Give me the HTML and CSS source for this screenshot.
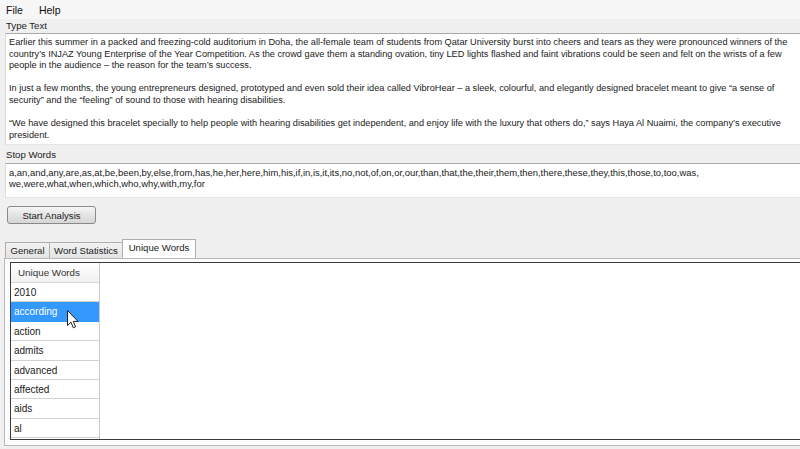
FILE: index.html
```html
<!DOCTYPE html>
<html lang="en">
<head>
  <meta charset="UTF-8" />
  <title>Text Analyzer</title>
  <link rel="stylesheet" href="styles.css">
</head>
<body>
  <div class="window">
    <div class="menubar">
      <span class="menu-item">File</span>
      <span class="menu-item">Help</span>
    </div>
    <div class="field-label label-type">Type Text</div>
    <div class="textbox main-text">
      <div>Earlier this summer in a packed and freezing-cold auditorium in Doha, the all-female team of students from Qatar University burst into cheers and tears as they were pronounced winners of the</div>
      <div>country’s INJAZ Young Enterprise of the Year Competition. As the crowd gave them a standing ovation, tiny LED lights flashed and faint vibrations could be seen and felt on the wrists of a few</div>
      <div>people in the audience – the reason for the team’s success.</div>
      <div>&nbsp;</div>
      <div>In just a few months, the young entrepreneurs designed, prototyped and even sold their idea called VibroHear – a sleek, colourful, and elegantly designed bracelet meant to give “a sense of</div>
      <div>security” and the “feeling” of sound to those with hearing disabilities.</div>
      <div>&nbsp;</div>
      <div>“We have designed this bracelet specially to help people with hearing disabilities get independent, and enjoy life with the luxury that others do,” says Haya Al Nuaimi, the company’s executive</div>
      <div>president.</div>
    </div>
    <div class="field-label label-stop">Stop Words</div>
    <div class="textbox stop-text">
      <div>a,an,and,any,are,as,at,be,been,by,else,from,has,he,her,here,him,his,if,in,is,it,its,no,not,of,on,or,our,than,that,the,their,them,then,there,these,they,this,those,to,too,was,</div>
      <div>we,were,what,when,which,who,why,with,my,for</div>
    </div>
    <button class="btn-start">Start Analysis</button>
    <div class="tabs">
      <div class="tab tab-general">General</div>
      <div class="tab tab-stats">Word Statistics</div>
      <div class="tab tab-active">Unique Words</div>
    </div>
    <div class="tabpage">
      <div class="listbox">
        <div class="word-col">
          <div class="col-header">Unique Words</div>
          <div class="row">2010</div>
          <div class="row row-selected">according</div>
          <div class="row">action</div>
          <div class="row">admits</div>
          <div class="row">advanced</div>
          <div class="row">affected</div>
          <div class="row">aids</div>
          <div class="row">al</div>
        </div>
      </div>
      <svg class="cursor" width="12" height="19" viewBox="0 0 12 19">
        <path d="M0.5 0.5 L0.5 15.5 L4 12.2 L6.3 17.8 L8.6 16.8 L6.3 11.4 L11 11.4 Z" fill="#fff" stroke="#222" stroke-width="1" stroke-linejoin="round"/>
      </svg>
    </div>
  </div>
</body>
</html>
```

FILE: styles.css
```css
body {
  margin: 0;
  overflow: hidden;
  background: #f0f0f0;
  font-family: "Liberation Sans", Arial, sans-serif;
  color: #222;
}
.window {
  width: 830px;
  height: 449px;
  background: #f0f0f0;
  position: relative;
}
.menubar {
  height: 19px;
  background: #f7f7f7;
  display: flex;
  align-items: center;
  padding-left: 6px;
  gap: 16px;
  font-size: 10.5px;
  color: #111;
}
.field-label {
  font-size: 9.6px;
  padding-left: 6px;
  color: #222;
}
.label-type {
  height: 14px;
  line-height: 14px;
}
.label-stop {
  height: 18px;
  line-height: 20px;
}
.textbox {
  margin-left: 5px;
  background: #fff;
  border-top: 1px solid #a9a9a9;
  border-left: 1px solid #dcdcdc;
  border-bottom: 1px solid #e6e6e6;
  box-sizing: border-box;
  font-size: 9.2px;
  line-height: 11.6px;
  white-space: nowrap;
  padding: 3px 3px;
  color: #1a1a1a;
}
.main-text {
  height: 112px;
}
.stop-text {
  height: 35px;
  padding-top: 4px;
  font-size: 9.45px;
  line-height: 10.8px;
}
.btn-start {
  display: block;
  margin: 8px 0 0 7px;
  width: 89px;
  height: 18px;
  padding: 0;
  font-family: "Liberation Sans", Arial, sans-serif;
  font-size: 9.6px;
  color: #222;
  border: 1px solid #8a8a8a;
  border-radius: 3px;
  background: linear-gradient(#f6f6f6, #e4e4e4 50%, #d6d6d6);
}
.tabs {
  display: flex;
  align-items: flex-end;
  margin-top: 15px;
  padding-left: 5px;
  height: 19px;
  box-sizing: border-box;
}
.tab {
  height: 16px;
  line-height: 16px;
  font-size: 9.6px;
  white-space: nowrap;
  text-align: center;
  background: linear-gradient(#f2f2f2, #e4e4e4);
  border: 1px solid #aeaeae;
  border-bottom: none;
  box-sizing: border-box;
  margin-right: -1px;
}
.tab-general { width: 45px; }
.tab-stats { width: 74px; }
.tab-active {
  width: 74px;
  height: 19px;
  line-height: 16px;
  background: #fdfdfd;
}
.tabpage {
  position: relative;
  margin-left: 4px;
  height: 188px;
  background: #fcfcfc;
  border: 1px solid #b8b8b8;
  box-sizing: border-box;
  padding: 3px 0 0 5px;
}
.listbox {
  height: 178px;
  background: #fff;
  border: 1px solid #3a3a3a;
  box-sizing: border-box;
}
.word-col {
  width: 89px;
  border-right: 1px solid #c9c9c9;
  height: 100%;
  box-sizing: border-box;
}
.col-header {
  height: 19px;
  line-height: 19px;
  text-align: center;
  font-size: 9.8px;
  color: #333;
  background: linear-gradient(#ffffff, #f1f1f1);
  border-bottom: 1px solid #d6d6d6;
  padding-right: 12px;
}
.row {
  height: 19.4px;
  line-height: 19px;
  padding-left: 3px;
  font-size: 10px;
  color: #1a1a1a;
  border-bottom: 1px solid #d2d2d2;
  box-sizing: border-box;
}
.row-selected {
  background: #3399ff;
  color: #fff;
  border-bottom-color: #3399ff;
}
.cursor {
  position: absolute;
  left: 62px;
  top: 51px;
}
```
